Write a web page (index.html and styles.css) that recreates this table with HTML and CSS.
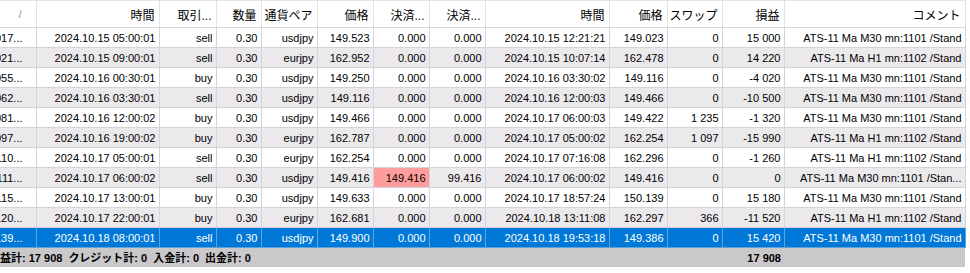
FILE: index.html
```html
<!DOCTYPE html>
<html lang="ja">
<head>
<meta charset="utf-8">
<title>取引履歴</title>
<link rel="stylesheet" href="styles.css">
</head>
<body>
<table class="grid">
  <colgroup>
    <col class="w36"><col class="w123"><col class="w57"><col class="w45"><col class="w56"><col class="w56"><col class="w56"><col class="w56"><col class="w124"><col class="w58"><col class="w55"><col class="w62"><col class="w181">
  </colgroup>
  <thead>
    <tr>
      <th class="sort"><span class="slash">/</span></th>
      <th>時間</th><th>取引...</th><th>数量</th><th>通貨ペア</th><th>価格</th><th>決済...</th><th>決済...</th><th>時間</th><th>価格</th><th>スワップ</th><th>損益</th><th>コメント</th>
    </tr>
  </thead>
  <tbody>
    <tr><td class="tk"><div class="clip">5017...</div></td><td>2024.10.15 05:00:01</td><td>sell</td><td>0.30</td><td>usdjpy</td><td>149.523</td><td>0.000</td><td>0.000</td><td>2024.10.15 12:21:21</td><td>149.023</td><td>0</td><td>15 000</td><td>ATS-11 Ma M30 mn:1101 /Stand</td></tr>
    <tr><td class="tk"><div class="clip">6021...</div></td><td>2024.10.15 09:00:01</td><td>sell</td><td>0.30</td><td>eurjpy</td><td>162.952</td><td>0.000</td><td>0.000</td><td>2024.10.15 10:07:14</td><td>162.478</td><td>0</td><td>14 220</td><td>ATS-11 Ma H1 mn:1102 /Stand</td></tr>
    <tr><td class="tk"><div class="clip">6055...</div></td><td>2024.10.16 00:30:01</td><td>buy</td><td>0.30</td><td>usdjpy</td><td>149.250</td><td>0.000</td><td>0.000</td><td>2024.10.16 03:30:02</td><td>149.116</td><td>0</td><td>-4 020</td><td>ATS-11 Ma M30 mn:1101 /Stand</td></tr>
    <tr><td class="tk"><div class="clip">6062...</div></td><td>2024.10.16 03:30:01</td><td>sell</td><td>0.30</td><td>usdjpy</td><td>149.116</td><td>0.000</td><td>0.000</td><td>2024.10.16 12:00:03</td><td>149.466</td><td>0</td><td>-10 500</td><td>ATS-11 Ma M30 mn:1101 /Stand</td></tr>
    <tr><td class="tk"><div class="clip">6081...</div></td><td>2024.10.16 12:00:02</td><td>buy</td><td>0.30</td><td>usdjpy</td><td>149.466</td><td>0.000</td><td>0.000</td><td>2024.10.17 06:00:03</td><td>149.422</td><td>1 235</td><td>-1 320</td><td>ATS-11 Ma M30 mn:1101 /Stand</td></tr>
    <tr><td class="tk"><div class="clip">6097...</div></td><td>2024.10.16 19:00:02</td><td>buy</td><td>0.30</td><td>eurjpy</td><td>162.787</td><td>0.000</td><td>0.000</td><td>2024.10.17 05:00:02</td><td>162.254</td><td>1 097</td><td>-15 990</td><td>ATS-11 Ma H1 mn:1102 /Stand</td></tr>
    <tr><td class="tk"><div class="clip">7110...</div></td><td>2024.10.17 05:00:01</td><td>sell</td><td>0.30</td><td>eurjpy</td><td>162.254</td><td>0.000</td><td>0.000</td><td>2024.10.17 07:16:08</td><td>162.296</td><td>0</td><td>-1 260</td><td>ATS-11 Ma H1 mn:1102 /Stand</td></tr>
    <tr><td class="tk"><div class="clip">7111...</div></td><td>2024.10.17 06:00:02</td><td>sell</td><td>0.30</td><td>usdjpy</td><td>149.416</td><td class="hit">149.416</td><td>99.416</td><td>2024.10.17 06:00:02</td><td>149.416</td><td>0</td><td>0</td><td>ATS-11 Ma M30 mn:1101 /Stan...</td></tr>
    <tr><td class="tk"><div class="clip">7115...</div></td><td>2024.10.17 13:00:01</td><td>buy</td><td>0.30</td><td>usdjpy</td><td>149.633</td><td>0.000</td><td>0.000</td><td>2024.10.17 18:57:24</td><td>150.139</td><td>0</td><td>15 180</td><td>ATS-11 Ma M30 mn:1101 /Stand</td></tr>
    <tr><td class="tk"><div class="clip">7120...</div></td><td>2024.10.17 22:00:01</td><td>buy</td><td>0.30</td><td>eurjpy</td><td>162.681</td><td>0.000</td><td>0.000</td><td>2024.10.18 13:11:08</td><td>162.297</td><td>366</td><td>-11 520</td><td>ATS-11 Ma H1 mn:1102 /Stand</td></tr>
    <tr class="sel"><td class="tk"><div class="clip">7139...</div></td><td>2024.10.18 08:00:01</td><td>sell</td><td>0.30</td><td>usdjpy</td><td>149.900</td><td>0.000</td><td>0.000</td><td>2024.10.18 19:53:18</td><td>149.386</td><td>0</td><td>15 420</td><td>ATS-11 Ma M30 mn:1101 /Stand</td></tr>
  </tbody>
  <tfoot>
    <tr>
      <td colspan="11" class="sum"><span class="lead">損益計: 17 908</span><span class="grp">クレジット計: 0</span><span class="grp">入金計: 0</span><span class="grp">出金計: 0</span></td>
      <td class="tot">17 908</td>
      <td></td>
    </tr>
  </tfoot>
</table>
</body>
</html>
```

FILE: styles.css
```css
html, body {
  margin: 0;
  padding: 0;
  background: #ffffff;
}

.grid {
  width: 965px;
  border-collapse: collapse;
  table-layout: fixed;
  font-family: "Liberation Sans", "Noto Sans CJK JP", sans-serif;
  font-size: 11px;
  color: #000;
}

.w36 { width: 36px; }
.w123 { width: 123px; }
.w57 { width: 57px; }
.w45 { width: 45px; }
.w56 { width: 56px; }
.w58 { width: 58px; }
.w55 { width: 55px; }
.w62 { width: 62px; }
.w124 { width: 124px; }
.w181 { width: 181px; }

.grid th {
  height: 27px;
  padding: 0 4px 0 0;
  text-align: right;
  font-weight: normal;
  font-size: 12px;
  background: #ffffff;
  border-top: 1px solid #e3e3e3;
  border-left: 1px solid #e3e3e3;
  border-right: 1px solid #e3e3e3;
  border-bottom: 1px solid #d9d6db;
  white-space: nowrap;
  overflow: hidden;
  box-sizing: border-box;
}

.grid th.sort {
  border-left: none;
}

.slash {
  display: inline-block;
  color: #8a8a8a;
  font-size: 10px;
  margin-right: 10px;
}

.grid td {
  height: 19px;
  padding: 0 3px 0 0;
  text-align: right;
  white-space: nowrap;
  overflow: hidden;
  border: 1px solid #d6d2d8;
  line-height: 18px;
}

.grid tbody tr:nth-child(even) td {
  background: #ece9ed;
}

.grid td.tk {
  border-left: none;
  padding: 0 13px 0 0;
}

.clip {
  display: flex;
  justify-content: flex-end;
  overflow: hidden;
  white-space: nowrap;
  margin-left: -3px;
}

.grid tbody tr td.hit {
  background: #ff9d9d;
}

.grid tbody tr.sel td {
  background: #0078d7;
  color: #ffffff;
  border-color: #5fa3dd;
}

.grid tfoot td {
  background: #cac8ca;
  border: none;
  border-top: 1px solid #cac8ca;
  font-weight: bold;
  font-size: 11px;
  height: 19px;
  padding: 0;
}

.grid tfoot td.sum {
  text-align: left;
  overflow: visible;
}

.lead {
  margin-left: -11px;
  margin-right: 6px;
}

.grp {
  margin-right: 6px;
}

.grid tfoot td.tot {
  text-align: right;
  padding-right: 3px;
}
```
